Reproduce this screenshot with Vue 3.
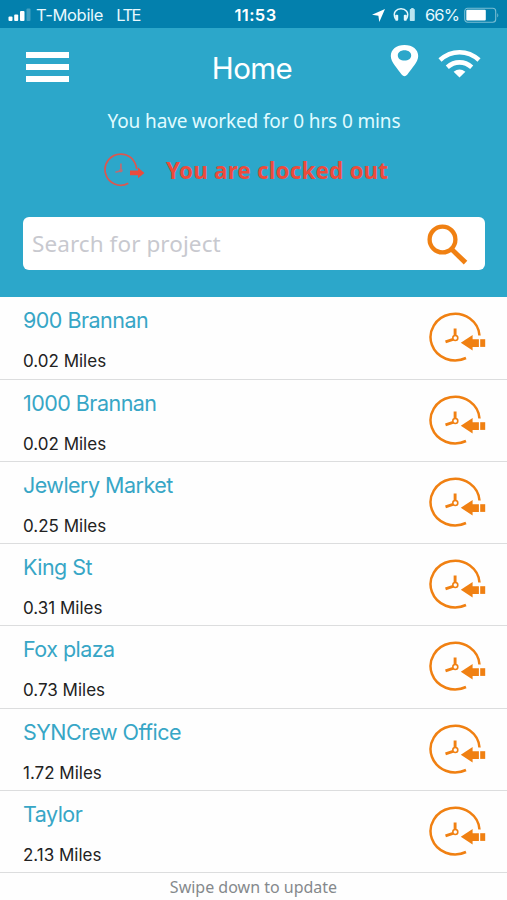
<script setup>
const projects = [
  { name: '900 Brannan', distance: '0.02 Miles' },
  { name: '1000 Brannan', distance: '0.02 Miles' },
  { name: 'Jewlery Market', distance: '0.25 Miles' },
  { name: 'King St', distance: '0.31 Miles' },
  { name: 'Fox plaza', distance: '0.73 Miles' },
  { name: 'SYNCrew Office', distance: '1.72 Miles' },
  { name: 'Taylor', distance: '2.13 Miles' },
]
</script>

<template>
  <div class="screen">
    <div class="status">
      <div class="status-left">
        <svg class="signal" width="23" height="14" viewBox="0 0 23 14" fill="#fff">
          <rect x="0.5" y="8.5" width="4" height="4.5" rx="1" />
          <rect x="6.2" y="6.5" width="4" height="6.5" rx="1" />
          <rect x="12" y="3" width="4.5" height="10" rx="1" />
          <rect x="18.5" y="0.5" width="4" height="12.5" rx="1" opacity="0.25" />
        </svg>
        <span class="carrier">T-Mobile</span>
        <span class="network">LTE</span>
      </div>
      <span class="time">11:53</span>
      <div class="status-right">
        <svg class="nav" width="15" height="15" viewBox="0 0 15 15"><path d="M14 1 8.3 14 7.4 7.7 1 6.8Z" fill="#fff" /></svg>
        <svg class="phones" width="23" height="16" viewBox="0 0 23 16">
          <path d="M2.500 12C-1 5 4 1.700 8 1.700S17 5 13.500 12" fill="none" stroke="#e4f7fc" stroke-width="1.500" />
          <rect x="2.2" y="7.8" width="3" height="6" rx="1" fill="#e4f7fc" />
          <rect x="10.8" y="7.8" width="3" height="6" rx="1" fill="#e4f7fc" />
          <rect x="16.800" y="2" width="5" height="12" rx="0.7" fill="#b9e4f0" />
          <rect x="18.2" y="1" width="2.4" height="1.5" fill="#b9e4f0" />
        </svg>
        <span class="percent">66%</span>
        <svg class="battery" width="36" height="17" viewBox="0 0 36 17">
          <rect x="0.7" y="1.2" width="31" height="14" rx="3" fill="none" stroke="#79bdd3" stroke-width="1.1" />
          <rect x="2.3" y="2.8" width="19.5" height="10.8" rx="1" fill="#fff" />
          <path d="M33.3 6v4.6q2-2.3 0-4.6" fill="#79bdd3" />
        </svg>
      </div>
    </div>

    <header class="header">
      <div class="bar">
        <div class="menu"><i></i><i></i><i></i></div>
        <h1>Home</h1>
        <div class="tools">
          <svg class="pin" width="29" height="33" viewBox="0 0 29 33">
            <path fill="#fff" fill-rule="evenodd" d="M14.5 1C6.4 1 .8 5.500.8 12c0 6.200 6.700 12.300 10.800 18.600q2.900 3.200 5.800 0C21.500 24.300 28.200 18.200 28.200 12 28.200 5.500 22.600 1 14.500 1ZM14.500 6.200c3.900 0 6.700 2.100 6.700 5.200s-2.800 5.200-6.700 5.200-6.700-2.100-6.700-5.200 2.800-5.200 6.700-5.200Z" />
          </svg>
          <svg class="wifi" width="43" height="29" viewBox="0 0 43 29">
            <g fill="none" stroke="#fff" stroke-width="4.600">
              <path d="M2 11C13.500.6 29.500.6 41 11" />
              <path d="M9.300 18.200c7.300-6.500 17.100-6.500 24.400 0" />
            </g>
            <path d="M15.600 22.800q5.900-4.700 11.800 0L21.500 28.600Z" fill="#fff" />
          </svg>
        </div>
      </div>
      <p class="worked">You have worked for 0 hrs 0 mins</p>
      <div class="clocked">
        <svg width="42" height="36" viewBox="0 0 42 36">
          <g fill="none" stroke="#dc574f" stroke-width="1.700">
            <path d="M32.800 17C31 6.800 24.300 2.100 16.800 2.100A15.600 15.600 0 1 0 24.300 31.300" />
            <path d="M16.900 11.500v7.300l-5.500 1.500" stroke="#b86e76" />
          </g>
          <circle cx="16.900" cy="18.600" r="1.800" fill="#b86e76" />
          <path d="M26 18.600h8v-3.100l6.400 5.400-6.400 5.400v-3.100H26Z" fill="#ec4b3c" />
        </svg>
        <strong>You are clocked out</strong>
      </div>
      <div class="search">
        <span>Search for project</span>
        <svg width="42" height="42" viewBox="0 0 42 42">
          <circle cx="15.500" cy="15.500" r="12.900" fill="none" stroke="#f08012" stroke-width="4.300" />
          <path d="m26.300 23.500 14 13.300-3.500 3.700L23 27Z" fill="#f08012" />
        </svg>
      </div>
    </header>

    <main class="list">
      <section v-for="project in projects" :key="project.name" class="row">
        <div class="info">
          <h2>{{ project.name }}</h2>
          <p>{{ project.distance }}</p>
        </div>
        <svg width="58" height="52" viewBox="0 0 58 52">
          <g fill="none" stroke="#f08012" stroke-width="2.500">
            <path d="M51.500 24.500A24.500 23.300 0 1 0 38 47" />
            <path d="M27.100 17.500v7M25 28.400l-7.500 2.500" stroke-width="2.900" />
            <circle cx="27.300" cy="27" r="2.500" stroke-width="1.600" />
          </g>
          <path d="m32.800 31.800 11.800-7.800v4.200h6.300v7.700h-6.300v3.700Z" fill="#f08012" />
          <path d="M52.200 28.200h5v7.700h-5Z" fill="#f08012" />
        </svg>
      </section>
    </main>
    <footer>Swipe down to update</footer>
  </div>
</template>

<style>
body {
  margin: 0;
  background: #fff;
}
</style>

<style scoped>
.screen {
  display: flex;
  flex-direction: column;
  width: 507px;
  height: 900px;
  overflow: hidden;
  background: #fefefe;
  font-family: Inter, "Liberation Sans", sans-serif;
}
.screen > * {
  flex-shrink: 0;
}
.status {
  display: grid;
  grid-template-columns: 1fr auto 1fr;
  align-items: center;
  box-sizing: border-box;
  height: 28px;
  padding: 2px 7px 0 8px;
  background: #0380ad;
  color: #e8f8fd;
  font-size: 16.500px;
}
.status-left,
.status-right {
  display: flex;
  align-items: center;
}
.status-right {
  justify-content: flex-end;
}
.carrier {
  margin-left: 5px;
  letter-spacing: -0.300px;
}
.network {
  margin-left: 13px;
  letter-spacing: -1.500px;
}
.time {
  padding-left: 3px;
  color: #fff;
  font-weight: 600;
  letter-spacing: 0.400px;
}
.phones {
  margin-left: 7px;
}
.percent {
  margin: 0 5px 0 9px;
  letter-spacing: -0.900px;
}
.header {
  display: flex;
  flex-direction: column;
  box-sizing: border-box;
  height: 269.400px;
  padding: 0 22px 0 23px;
  background: #2ca7ca;
  color: #fff;
}
.bar {
  display: grid;
  grid-template-columns: 1fr auto 1fr;
  align-items: center;
  height: 79px;
}
.menu {
  display: flex;
  flex-direction: column;
  gap: 6.500px;
  width: 43px;
  margin: 0 0 1px 3px;
}
.menu i {
  height: 5.500px;
  background: #fff;
}
h1,
h2,
p {
  margin: 0;
  font-weight: 400;
}
h1 {
  padding: 0 4px 0 0;
  font-size: 29.500px;
  line-height: 36px;
  letter-spacing: -0.600px;
}
.tools {
  display: flex;
  align-items: flex-start;
  justify-content: flex-end;
  gap: 19px;
  padding: 0 4px 13px 0;
}
.wifi {
  margin-top: 5px;
}
.worked {
  height: 28px;
  color: #e0fbff;
  font-family: "Noto Sans", sans-serif;
  font-size: 19px;
  line-height: 28px;
  letter-spacing: -0.130px;
  text-align: center;
}
.clocked {
  display: flex;
  align-items: center;
  gap: 20px;
  height: 36px;
  margin: 17px 0 0 81px;
  color: #ec4b3c;
  font-family: "Noto Sans", sans-serif;
  font-size: 22.500px;
  letter-spacing: 0.130px;
}
.search {
  display: flex;
  align-items: center;
  justify-content: space-between;
  box-sizing: border-box;
  height: 53px;
  margin-top: 29px;
  padding: 0 16px 0 9px;
  border-radius: 6px;
  background: #fff;
  color: #c8c9cf;
  font-family: "Noto Sans", sans-serif;
  font-size: 22.500px;
  letter-spacing: 0.080px;
}
.search svg {
  margin-top: 2px;
}
.row {
  display: flex;
  justify-content: space-between;
  box-sizing: border-box;
  height: 82.250px;
  padding: 12px 21px 0 23px;
  border-bottom: 1px solid #dcddde;
}
.row svg {
  margin-top: 2px;
}
h2 {
  color: #37a6c6;
  font-size: 21.500px;
  line-height: 22px;
  letter-spacing: -0.530px;
}
.info p {
  margin-top: 19px;
  color: #222;
  font-size: 17px;
  line-height: 22px;
}
footer {
  color: #85898c;
  font-family: "Noto Sans", sans-serif;
  font-size: 16px;
  line-height: 28px;
  text-align: center;
}
</style>
